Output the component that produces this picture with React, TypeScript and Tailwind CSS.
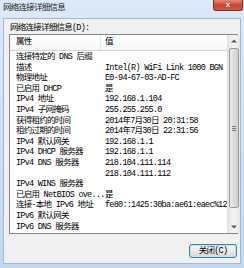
import React from "react";

const rows: [string, string][] = [
  ["连接特定的 DNS 后缀", ""],
  ["描述", "Intel(R) WiFi Link 1000 BGN"],
  ["物理地址", "E0-94-67-03-AD-FC"],
  ["已启用 DHCP", "是"],
  ["IPv4 地址", "192.168.1.104"],
  ["IPv4 子网掩码", "255.255.255.0"],
  ["获得租约的时间", "2014年7月30日 20:31:58"],
  ["租约过期的时间", "2014年7月30日 22:31:56"],
  ["IPv4 默认网关", "192.168.1.1"],
  ["IPv4 DHCP 服务器", "192.168.1.1"],
  ["IPv4 DNS 服务器", "218.104.111.114"],
  ["", "218.104.111.112"],
  ["IPv4 WINS 服务器", ""],
  ["已启用 NetBIOS ove...", "是"],
  ["连接-本地 IPv6 地址", "fe80::1425:30ba:ae61:eaec%12"],
  ["IPv6 默认网关", ""],
  ["IPv6 DNS 服务器", ""],
];

const font = {
  fontFamily: '"Liberation Mono", "Noto Sans CJK SC", monospace',
};

export default function App() {
  return (
    <div
      className="w-[244px] h-[268px] flex flex-col bg-gradient-to-b from-[#dce9f7] to-[#c3d7ee] text-[8.5px] leading-none text-black tracking-[-0.75px] overflow-hidden"
      style={font}
    >
      {/* title bar */}
      <div className="h-[18px] flex justify-between shrink-0">
        <div className="pl-[3px] pt-[4px] text-[#222]">网络连接详细信息</div>
        <div className="w-[30px] h-[11px] mr-[1px] rounded-b-[3px] bg-gradient-to-b from-[#e3897a] via-[#c9442f] to-[#d8563c] border border-[#8c2b1c] border-t-0 flex items-center justify-center text-white text-[8px] font-bold tracking-normal">
          x
        </div>
      </div>

      {/* body */}
      <div className="flex-1 mx-[3px] mb-[4px] bg-[#f0f0f0] border border-[#a8b8cc] flex flex-col pl-[5px] pr-[2px]">
        <div className="h-[15px] pt-[5px] pl-[1px] shrink-0">网络连接详细信息(D):</div>
        <div className="h-[200px] border border-[#828790] bg-white flex shrink-0">
          <div className="flex-1 flex flex-col">
            <div className="h-[16px] flex items-center border-b border-[#d5d5d5] bg-gradient-to-b from-white to-[#f6f7f9] shrink-0">
              <div className="w-[91px] pl-[6px] border-r border-[#e3e5e9] h-full flex items-center">属性</div>
              <div className="pl-[4px]">值</div>
            </div>
            <div className="flex flex-col pt-[1px]">
              {rows.map(([k, v], i) => (
                <div key={i} className="h-[10.6px] flex items-center whitespace-nowrap">
                  <div className="w-[91px] shrink-0 pl-[6px]">{k}</div>
                  <div className="pl-[4px]">{v}</div>
                </div>
              ))}
            </div>
          </div>
          {/* scrollbar */}
          <div className="w-[13px] flex flex-col bg-gradient-to-r from-[#e6e6e6] via-[#f4f4f4] to-[#e6e6e6] border-l border-[#e0e0e0] shrink-0">
            <div className="h-[12px] flex items-center justify-center shrink-0">
              <svg width="6" height="4" viewBox="0 0 6 4">
                <path d="M0 3.5 L3 0.5 L6 3.5 Z" fill="#5a5a5a" />
              </svg>
            </div>
            <div className="flex-1 px-[1px] pt-[1px]">
              <div className="h-[160px] rounded-[2px] border border-[#9a9a9a] bg-gradient-to-r from-[#ececec] via-[#dcdcdc] to-[#cfcfcf] flex items-center justify-center">
                <div className="flex flex-col gap-[1px]">
                  <div className="w-[4px] h-[1px] bg-[#777]" />
                  <div className="w-[4px] h-[1px] bg-[#777]" />
                  <div className="w-[4px] h-[1px] bg-[#777]" />
                </div>
              </div>
            </div>
            <div className="h-[12px] flex items-center justify-center shrink-0">
              <svg width="6" height="4" viewBox="0 0 6 4">
                <path d="M0 0.5 L3 3.5 L6 0.5 Z" fill="#5a5a5a" />
              </svg>
            </div>
          </div>
        </div>
        <div className="flex-1 flex justify-end items-start pt-[10px] pr-[1px]">
          <div className="w-[48px] h-[14px] rounded-[3px] border border-[#3c7fb1] bg-gradient-to-b from-[#f2f2f2] via-[#ebebeb] to-[#d6d6d6] flex items-center justify-center shadow-[inset_0_0_0_1px_#bde4f6]">
            关闭(C)
          </div>
        </div>
      </div>
    </div>
  );
}
